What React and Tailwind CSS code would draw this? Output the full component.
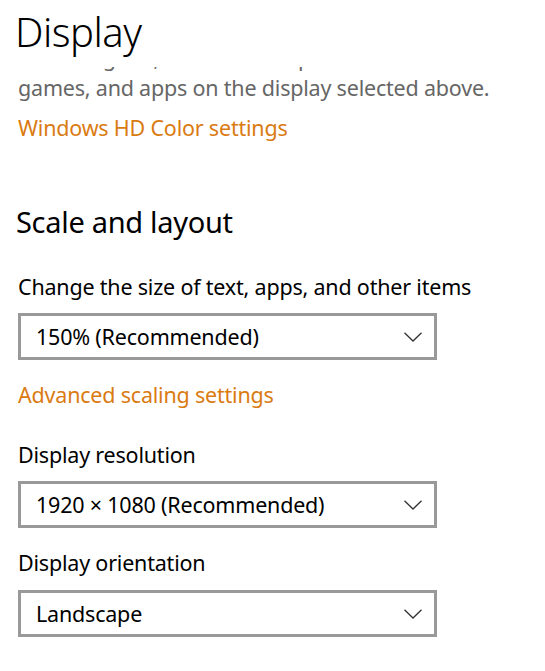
import React from "react";

const font = { fontFamily: '"Noto Sans", "Open Sans", sans-serif' };

function Chevron() {
  return (
    <svg width="18" height="10" viewBox="0 0 18 10" className="shrink-0">
      <polyline points="0.5,0.8 9,9 17.5,0.8" fill="none" stroke="#333333" strokeWidth="1.3" />
    </svg>
  );
}

function Dropdown({ value, className = "" }) {
  return (
    <div
      className={`ml-[18px] w-[419px] h-[47px] border-[3px] border-[#999999] bg-white flex items-center justify-between pl-[15px] pr-[12px] ${className}`}
    >
      <span className="text-[21.5px] tracking-[-0.2px] leading-[41px] text-black whitespace-nowrap">{value}</span>
      <Chevron />
    </div>
  );
}

const body = "text-[21.5px] tracking-[-0.2px] leading-[30px]";

export default function App() {
  return (
    <div className="w-[545px] h-[671px] bg-white overflow-hidden" style={font}>
      <div className="h-[67px] pl-[15px] pt-[4px]">
        <div className="text-[40px] tracking-[-0.5px] leading-[56px] font-light text-black">Display</div>
      </div>
      <div className="overflow-hidden">
        <div className={`mt-[-24px] pl-[18px] pr-[20px] ${body} text-[#666666]`}>
          <div className="whitespace-nowrap">Get a brighter, more vibrant picture in HDR</div>
          <div className="whitespace-nowrap">games, and apps on the display selected above.</div>
        </div>
      </div>
      <div className={`mt-[10px] pl-[18px] ${body} text-[#da7b12]`}>Windows HD Color settings</div>
      <div className="mt-[59px] pl-[16px] text-[29px] tracking-[-0.3px] leading-[40px] text-black">
        Scale and layout
      </div>
      <div className={`mt-[30px] pl-[18px] ${body} text-black whitespace-nowrap`}>
        Change the size of text, apps, and other items
      </div>
      <Dropdown value="150% (Recommended)" className="mt-[11px]" />
      <div className={`mt-[20px] pl-[18px] ${body} text-[#da7b12]`}>Advanced scaling settings</div>
      <div className={`mt-[30px] pl-[18px] ${body} text-black`}>Display resolution</div>
      <Dropdown value="1920 × 1080 (Recommended)" className="mt-[11px]" />
      <div className={`mt-[20px] pl-[18px] ${body} text-black`}>Display orientation</div>
      <Dropdown value="Landscape" className="mt-[12px]" />
    </div>
  );
}
